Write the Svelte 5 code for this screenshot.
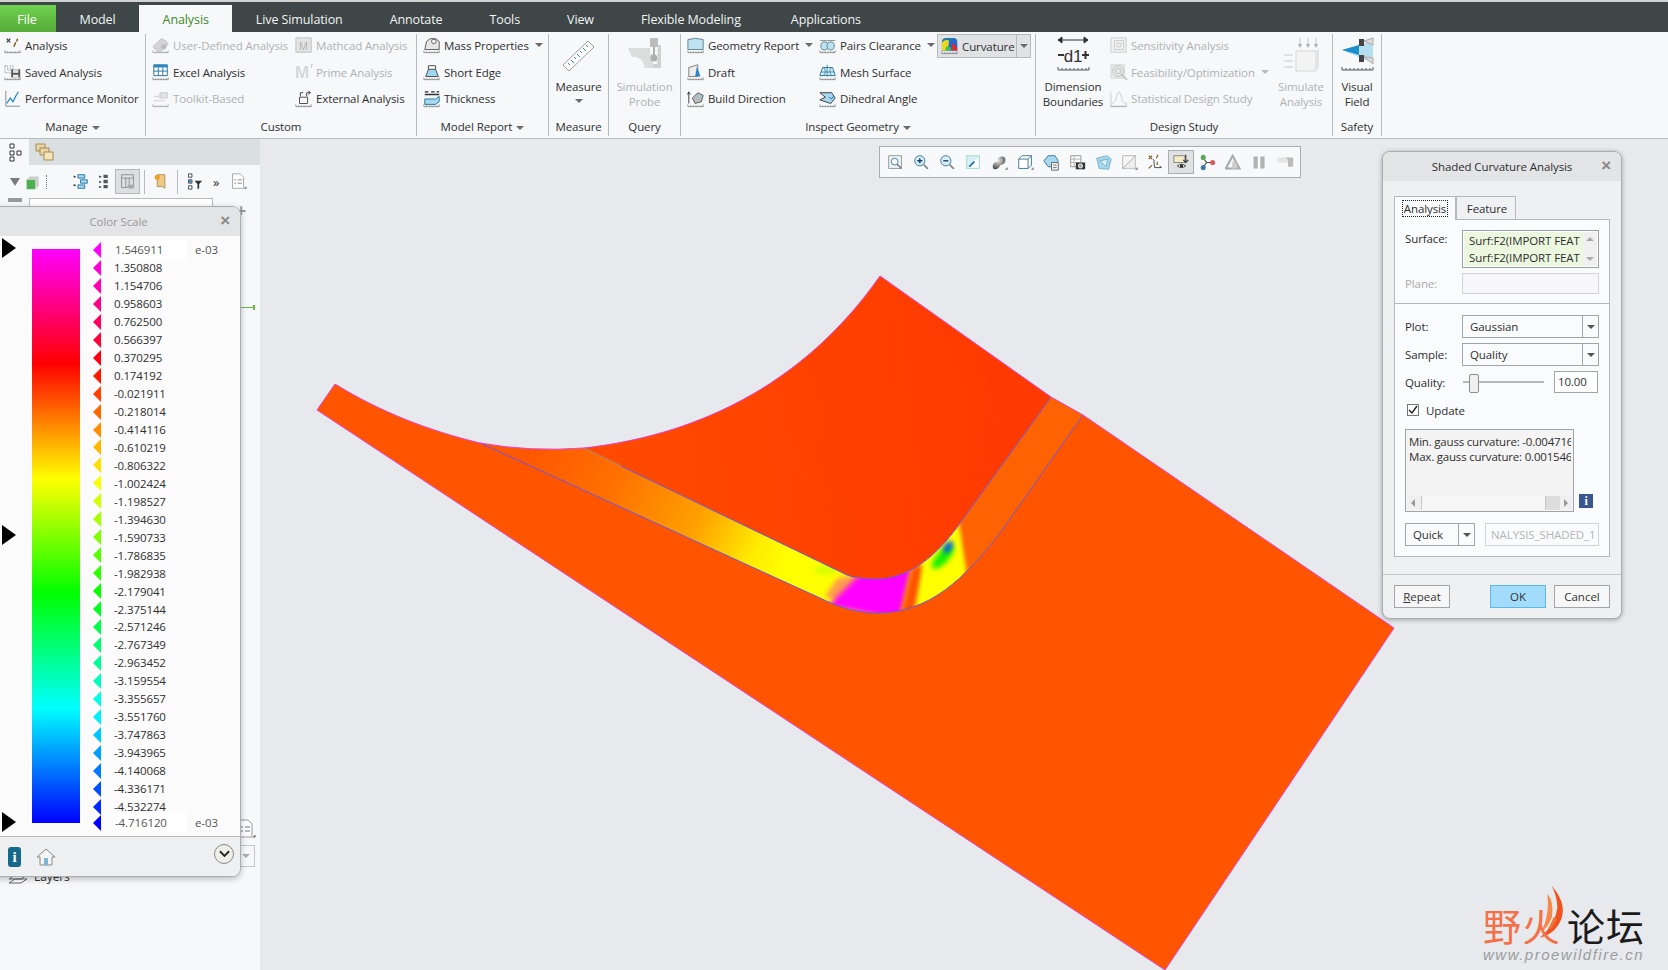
<script lang="ts">
  const R = '<path d="M1 18.5h17M1 16v2.5M4 17v1.5M7 17v1.5M10 17v1.5M13 17v1.5M16 17v1.5M18 16v2.5" stroke="#777" stroke-width=".8" fill="none"/>';
  const icons: Record<string, string> = {
    analysis: R + '<path d="M3 3l4 4M7 3l-4 4" stroke="#333" stroke-width="1.3"/><path d="M11 12l2-5M14 6l1-3" stroke="#7a5a18" stroke-width="1.6"/>',
    saved: R + '<path d="M1 3h3v5h3V3h3v8H1z" fill="none" stroke="#888" stroke-width=".8" stroke-dasharray="2 1"/><path d="M8 7h10v9H8z" fill="#555"/><path d="M10 7h6v4h-6z" fill="#ddd"/><path d="M10 13h6v3h-6z" fill="#eee"/>',
    perf: '<path d="M2 1v17h16" stroke="#777" fill="none" stroke-width=".9"/><path d="M3 15l4-6 3 4 3-6 3-5" stroke="#2a86c4" fill="none" stroke-width="1.4"/>',
    userdef: R + '<path d="M1 12l9-9 5 2 3 4-8 8-4 0z" fill="#c9c9c9" stroke="#aaa"/><circle cx="13" cy="12" r="3" fill="#aaa"/>',
    mathcad: '<path d="M1 2h17v16H1z" fill="#ddd" stroke="#aaa"/><text x="9.500" y="15" font-size="12" text-anchor="middle" fill="#999" font-family="Liberation Sans">M</text>',
    excel: R + '<path d="M2 2h15v12H2z" fill="#fff" stroke="#1c6f9c"/><path d="M2 2h15v3H2z" fill="#2a86c4"/><path d="M7 5v9M12 5v9M2 9h15" stroke="#1c6f9c"/>',
    prime: '<text x="0" y="17" font-size="19" font-weight="700" fill="#ccc" font-family="Liberation Sans">M</text><path d="M19 1l-1 4" stroke="#bbb" stroke-width="1.5"/>',
    toolkit: R + '<path d="M9 3h8v6H9z" fill="#ddd" stroke="#bbb"/><path d="M2 7h6M2 12h12M8 5l2 2-2 2" stroke="#bbb" fill="none"/>',
    external: R + '<path d="M5 8h9v7H5z" fill="#f5f5f5" stroke="#444"/><path d="M6 7V3h3M13 7V3h4M15 1l2 2-2 2" stroke="#333" fill="none"/>',
    mass: R + '<path d="M2 15l2-9 4-3h6l4 3v9z" fill="#e6e6e6" stroke="#555"/><circle cx="12" cy="6" r="2.5" fill="#fff" stroke="#555"/>',
    short: R + '<path d="M3 15l3-8h8l3 8z" fill="#9fd8ee" stroke="#444"/><path d="M6 3v4M14 3v4M6 3h8" stroke="#444" fill="none"/>',
    thick: R + '<path d="M2 10h12l4-3v6l-4 3H2z" fill="#a8d8ee" stroke="#1c6f9c"/><path d="M2 2h4M9 2h4M15 2h3M2 5h16" stroke="#333" stroke-width="1.4"/>',
    geometry: R + '<path d="M1 15V4q8-3 17 0v11z" fill="#bde3f1" stroke="#5a7f90"/>',
    draft: R + '<path d="M2 15V5l10-3v13z" fill="#eee" stroke="#777"/><path d="M11 4l4 11H9z" fill="#2a86c4"/>',
    build: R + '<path d="M2 15V3M0.5 5L2 2l1.5 3" stroke="#333" fill="none"/><path d="M6 9l6-6 6 3-2 7-7 2z" fill="#bbb" stroke="#555"/><path d="M9 9l5-4 3 2" fill="#8fd0ea"/>',
    pairs: R + '<path d="M1 5h17" stroke="#777" stroke-width=".8"/><ellipse cx="6" cy="11" rx="4" ry="4.500" fill="#bde3f1" stroke="#5a7f90"/><ellipse cx="13" cy="11" rx="4" ry="4.500" fill="#bde3f1" stroke="#5a7f90"/>',
    mesh: R + '<path d="M1 14L4 5h11l3 9z" fill="#d8eef7" stroke="#1c6f9c"/><path d="M2 10h15M9 2v13M5 5q4 4 0 9M14 5q-4 4 0 9" stroke="#1c6f9c" fill="none" stroke-width=".8"/>',
    dihedral: R + '<path d="M1 3h13l4 6-5 6-12-4 6-3z" fill="#a8d8ee" stroke="#333"/><path d="M11 8l3 2 2-3" stroke="#1c6f9c" fill="none"/>',
    curvature: R + '<path d="M1 15V5q0-4 5-4h8q4 0 4 4v10z" fill="#27a"/><path d="M1 15V6q4-4 8-2 0 6-3 11z" fill="#e8d820"/><path d="M9 4q5-3 9 2v9h-8z" fill="#2466d8"/><path d="M12 7q4 1 6 6v2h-6z" fill="#e02a20"/><path d="M5 12q3-3 6 0v3H5z" fill="#3ec04a"/>',
    sensitivity: '<path d="M1 2h17v16H1z" fill="#eee" stroke="#bbb"/><path d="M5 5h10v10H5zM8 8h4v4H8z" fill="none" stroke="#bbb"/>',
    feasibility: '<path d="M1 2h15v15H1z" fill="#e4e4e4" stroke="#ccc"/><circle cx="9" cy="9" r="6" fill="none" stroke="#aaa"/><circle cx="9" cy="9" r="3" fill="none" stroke="#aaa"/><path d="M12 12l7 7" stroke="#aaa" stroke-width="1.5"/>',
    statistical: R + '<path d="M1 15q5 0 6-6t3-7q2 1 3 7t6 6" fill="none" stroke="#bbb"/><path d="M1 2v13" stroke="#bbb"/>',

    // viewport toolbar
    refit: '<path d="M2 2h15v15H2z" fill="#eef6fa" stroke="#888"/><circle cx="9" cy="9" r="4" fill="#fff" stroke="#2a6a90"/><path d="M12 12l5 5" stroke="#777" stroke-width="1.6"/>',
    zin: '<circle cx="8" cy="8" r="6" fill="#d8eef7" stroke="#2a6a90"/><path d="M5 8h6M8 5v6" stroke="#123f66" stroke-width="1.6"/><path d="M12.500 12.500l5 5" stroke="#888" stroke-width="2"/>',
    zout: '<circle cx="8" cy="8" r="6" fill="#d8eef7" stroke="#2a6a90"/><path d="M5 8h6" stroke="#123f66" stroke-width="1.6"/><path d="M12.500 12.500l5 5" stroke="#888" stroke-width="2"/>',
    repaint: '<path d="M2 2h15v15H2z" fill="#d8eef7" stroke="#9db"/><path d="M3 16L16 4v12z" fill="#fff"/><path d="M5 15l6-6" stroke="#136f9c" stroke-width="2"/>',
    shade: '<defs><radialGradient id="sh" cx=".4" cy=".3" r=".8"><stop offset="0" stop-color="#eee"/><stop offset="1" stop-color="#333"/></radialGradient></defs><path d="M2 14q1-5 5-5 1-6 6-6 4 0 4 4 0 5-6 6-2 5-6 5-3 0-3-4z" fill="url(#sh)"/><path d="M17 18h2v-2" stroke="#444" fill="none"/>',
    cube: '<path d="M2 6h11v11H2zM2 6l4-4h11v11l-4 4M13 6l4-4" fill="#fff" stroke="#2a6a90"/><path d="M17 18h2v-2" stroke="#444" fill="none"/>',
    named: '<path d="M1 8l5-6h8l4 6-4 7H6z" fill="#a8d8ee" stroke="#2a6a90"/><path d="M10 10h8v9h-8z" fill="#f5f5f5" stroke="#555"/><path d="M12 13h4M12 16h4" stroke="#555"/>',
    camera: '<path d="M2 2h12v13H2z" fill="#fff" stroke="#888"/><path d="M2 6h12M2 10h12M6 2v13" stroke="#aaa"/><path d="M8 10h11v8H8z" fill="#333"/><circle cx="13.500" cy="14" r="2.500" fill="#aaa" stroke="#fff"/>',
    section: '<path d="M2 5l12-3 5 4-3 12-11-1z" fill="#a8d8ee" stroke="#6aa8c8"/><path d="M6 8l9-2-2 9z" fill="#dff1f8" stroke="#6aa8c8"/>',
    plane: '<path d="M2 17L17 2v15z" fill="#eee" stroke="#bbb"/><path d="M2 17L17 2H2z" fill="#f7f7f7" stroke="#aaa"/><path d="M17 18h2v-2" stroke="#444" fill="none"/>',
    datum: '<path d="M2 2l4 4M6 2L2 6M13 1l-2 4M2 17l4-4" stroke="#7a5a18" stroke-width="1.3"/><path d="M8 8l1 8h8M9 8l-2-2M15 14l2 2" stroke="#333" fill="none"/><path d="M12 9v4" stroke="#7a5a18" stroke-width="1.3"/>',
    appearance: '<path d="M1 2h13v8H1z" fill="#f6ecc8" stroke="#777"/><path d="M15 1v8M12 7l3 3 3-3" stroke="#333" fill="none" stroke-width="1.3"/><path d="M5 14q5-4 10 0-5 4-10 0z" fill="#fff" stroke="#333"/><circle cx="10" cy="14" r="2" fill="#333"/>',
    joint: '<path d="M5 5l4 5-4 5M9 10h7" stroke="#444" fill="none" stroke-width="1.3"/><circle cx="5" cy="4" r="3" fill="#5aa85a"/><circle cx="16" cy="10" r="3" fill="#d85a5a"/><circle cx="5" cy="16" r="3" fill="#3a7aaa"/>',
    tri: '<path d="M9 2l8 15H1z" fill="none" stroke="#aaa" stroke-width="2.500"/><path d="M9 8l5 3v6H8z" fill="#ccc"/>',
    pause: '<path d="M3 3h5v14H3zM11 3h5v14h-5z" fill="#b2b2b2"/>',
    record: '<path d="M1 4h6q6 0 6 6v5h6V4z" fill="#bbb"/><path d="M1 4h9q3 3 3 6H1z" fill="#e4e4e4"/>',

    // model tree
    treeNodes: '<path d="M5 2h4v4H5zM5 9h4v4H5zM5 15h4v4H5z" fill="#fff" stroke="#333"/><path d="M12 9h4v4h-4z" fill="#fff" stroke="#333"/>',
    folders: '<path d="M2 2h9v7H2z" fill="#e9d6a8" stroke="#a78a4c"/><path d="M6 6h9v7H6z" fill="#e9d6a8" stroke="#a78a4c"/><path d="M10 10h9v8h-9z" fill="#f3e4bc" stroke="#a78a4c"/>',
    expand: '<path d="M2 3l3 1.500L2 6zM2 13l3 1.500L2 16z" fill="#333"/><path d="M7 2h8v4H7zM10 8h8v4h-8zM7 14h8v4H7z" fill="#a8d8ee" stroke="#136f9c"/>',
    collapse: '<path d="M5 3l3 1.500L5 6zM5 9l3 1.500L5 12zM5 15l3 1.500L5 18z" fill="#333"/><path d="M10 2h5v4h-5zM10 8h5v4h-5zM10 14h5v4h-5z" fill="#555"/>',
    showcols: '<path d="M3 2h14v15H3zM3 6h14M8 6v11M12 6v11" fill="none" stroke="#888"/><ellipse cx="14" cy="16" rx="4" ry="2.500" fill="#aaa"/>',
    note: '<path d="M5 2h9v16l-3-2H5z" fill="#efc98a" stroke="#a78a4c"/><circle cx="5" cy="5" r="3" fill="#f0a020"/>',
    filter: '<path d="M3 1h4v4H3zM3 8h4v4H3zM3 15h4v4H3z" fill="#fff" stroke="#333"/><path d="M3.500 8.500h3v3h-3z" fill="#2a86c4"/><path d="M10 9h9l-3.500 4v5l-2 1v-6z" fill="#333"/>',
    doc: '<path d="M3 1h9l4 4v13H3z" fill="#fff" stroke="#999"/><path d="M5 8h2M9 8h5M5 12h2M9 12h5" stroke="#777"/><path d="M17 18h2v-2" stroke="#444" fill="none"/>',

    // big ribbon icons
    measure: '<path d="M2 28L27 4l6 6-25 24z" fill="#fff" stroke="#999"/><path d="M7 26l2 2M10 23l3 3M13 20l2 2M16 17l3 3M19 14l2 2M22 11l3 3M25 8l2 2" stroke="#2a86c4" stroke-width="1"/>',
    probe: '<path d="M1 11h22v6h3v14h-9q0-9-8-11H5z" fill="#d4d4d4"/><path d="M23 1h8v9h-8z" fill="#aaa"/><path d="M26 10h2v8h-2z" fill="#999"/><circle cx="27" cy="21" r="3.500" fill="#999"/><path d="M31 8h3v23h-8v-4h4z" fill="#c4c4c4"/>',
    dimension: '<path d="M1 3h30M1 3l4-3v6zM31 3l-4-3v6z" fill="#333" stroke="#333"/><path d="M1 18h6M25 18h7M28.500 14v8" stroke="#333" stroke-width="2"/><text x="16" y="25" font-size="17" text-anchor="middle" fill="#333" font-family="Liberation Sans">d1</text><path d="M1 33h31M1 30v3M5 31v2M9 31v2M13 31v2M17 31v2M21 31v2M25 31v2M29 31v2M32 30v3" stroke="#555"/>',
    simulate: '<path d="M13 14h20v20H13z" fill="#f2f2f2" stroke="#ccc"/><path d="M33 14l3-3v19l-3 4" fill="#ddd"/><path d="M17 1v9M25 1v9M33 1v9M1 18h9M1 24h9M1 30h9" stroke="#bbb" stroke-width="1.2"/><path d="M15 7l2 4 2-4M23 7l2 4 2-4M31 7l2 4 2-4" fill="#999"/>',
    visual: '<path d="M1 13l31-9v22z" fill="#b5def0"/><path d="M1 13l17-5v10z" fill="#1c90c8"/><path d="M18 2h5v7h-5zM18 18h5v7h-5z" fill="#444"/><path d="M23 4l9-3v7zM23 20l9 1v6z" fill="#ddd" stroke="#aaa"/><path d="M1 33h31M1 30v3M5 31v2M9 31v2M13 31v2M17 31v2M21 31v2M25 31v2M29 31v2M32 30v3" stroke="#555"/>'
  };

  const tabs = ['Model', 'Analysis', 'Live Simulation', 'Annotate', 'Tools', 'View', 'Flexible Modeling', 'Applications'];

  type Item = { t: string; i: string; off?: boolean; caret?: boolean; on?: boolean };
  type Col = { w: number; items?: Item[]; big?: { t: string[]; i: string; w: number; h: number; off?: boolean; caret?: boolean } };
  const groups: { label: string; w: number; pad: number; caret?: boolean; cols: Col[] }[] = [
    { label: 'Manage', w: 146, pad: 4, caret: true, cols: [{ w: 140, items: [
      { t: 'Analysis', i: 'analysis' }, { t: 'Saved Analysis', i: 'saved' }, { t: 'Performance Monitor', i: 'perf' } ] }] },
    { label: 'Custom', w: 271, pad: 6, cols: [
      { w: 143, items: [{ t: 'User-Defined Analysis', i: 'userdef', off: true }, { t: 'Excel Analysis', i: 'excel' }, { t: 'Toolkit-Based', i: 'toolkit', off: true }] },
      { w: 120, items: [{ t: 'Mathcad Analysis', i: 'mathcad', off: true }, { t: 'Prime Analysis', i: 'prime', off: true }, { t: 'External Analysis', i: 'external' }] } ] },
    { label: 'Model Report', w: 132, pad: 6, caret: true, cols: [{ w: 125, items: [
      { t: 'Mass Properties', i: 'mass', caret: true }, { t: 'Short Edge', i: 'short' }, { t: 'Thickness', i: 'thick' } ] }] },
    { label: 'Measure', w: 60, pad: 0, cols: [{ w: 59, big: { t: ['Measure'], i: 'measure', w: 36, h: 36, caret: true } }] },
    { label: 'Query', w: 72, pad: 0, cols: [{ w: 71, big: { t: ['Simulation', 'Probe'], i: 'probe', w: 36, h: 36, off: true } }] },
    { label: 'Inspect Geometry', w: 355, pad: 6, caret: true, cols: [
      { w: 132, items: [{ t: 'Geometry Report', i: 'geometry', caret: true }, { t: 'Draft', i: 'draft' }, { t: 'Build Direction', i: 'build' }] },
      { w: 118, items: [{ t: 'Pairs Clearance', i: 'pairs', caret: true }, { t: 'Mesh Surface', i: 'mesh' }, { t: 'Dihedral Angle', i: 'dihedral' }] },
      { w: 95, items: [{ t: 'Curvature', i: 'curvature', on: true }] } ] },
    { label: 'Design Study', w: 297, pad: 0, cols: [
      { w: 74, big: { t: ['Dimension', 'Boundaries'], i: 'dimension', w: 33, h: 36 } },
      { w: 170, items: [{ t: 'Sensitivity Analysis', i: 'sensitivity', off: true }, { t: 'Feasibility/Optimization', i: 'feasibility', off: true, caret: true }, { t: 'Statistical Design Study', i: 'statistical', off: true }] },
      { w: 42, big: { t: ['Simulate', 'Analysis'], i: 'simulate', w: 36, h: 36, off: true } } ] },
    { label: 'Safety', w: 49, pad: 0, cols: [{ w: 48, big: { t: ['Visual', 'Field'], i: 'visual', w: 33, h: 36 } }] }
  ];

  const viewTools = ['refit', 'zin', 'zout', 'repaint', 'shade', 'cube', 'named', 'camera', 'section', 'plane', 'datum', 'appearance', 'joint', 'tri', 'pause', 'record'];

  const values = ['1.546911', '1.350808', '1.154706', '0.958603', '0.762500', '0.566397', '0.370295', '0.174192', '-0.021911', '-0.218014', '-0.414116', '-0.610219', '-0.806322', '-1.002424', '-1.198527', '-1.394630', '-1.590733', '-1.786835', '-1.982938', '-2.179041', '-2.375144', '-2.571246', '-2.767349', '-2.963452', '-3.159554', '-3.355657', '-3.551760', '-3.747863', '-3.943965', '-4.140068', '-4.336171', '-4.532274', '-4.716120'];

  // magenta > red > yellow > green > cyan > blue
  function scaleColor(i: number) {
    const t = (i / (values.length - 1)) * 5;
    const s = Math.floor(Math.min(t, 4.999));
    const f = Math.round((t - s) * 255);
    if (s === 0) return `rgb(255,0,${255 - f})`;
    if (s === 1) return `rgb(255,${f},0)`;
    if (s === 2) return `rgb(${255 - f},255,0)`;
    if (s === 3) return `rgb(0,255,${f})`;
    return `rgb(0,${255 - f},255)`;
  }
</script>

<div class="app">
  <div class="tabbar">
    <div class="file">File</div>
    {#each tabs as t}
      <div class="tab" class:active={t === 'Analysis'}>{t}</div>
    {/each}
  </div>

  <div class="ribbon">
    {#each groups as g}
      <section class="group" style="width:{g.w}px">
        <div class="cols" style="padding-left:{g.pad}px">
          {#each g.cols as c}
            <div class="col" style="width:{c.w}px">
              {#if c.items}
                {#each c.items as it}
                  <div class="item" class:off={it.off} class:on={it.on}>
                    <svg class="ic" viewBox="0 0 20 20">{@html icons[it.i]}</svg>
                    <span>{it.t}</span>
                    {#if it.caret}<i class="caret"></i>{/if}
                    {#if it.on}<b class="split"><i class="caret"></i></b>{/if}
                  </div>
                {/each}
              {:else if c.big}
                <div class="big" class:off={c.big.off}>
                  <svg width={c.big.w} height={c.big.h} viewBox="0 0 {c.big.w} {c.big.h}">{@html icons[c.big.i]}</svg>
                  {#each c.big.t as line}<span>{line}</span>{/each}
                  {#if c.big.caret}<i class="caret"></i>{/if}
                </div>
              {/if}
            </div>
          {/each}
        </div>
        <div class="glabel">{g.label}{#if g.caret}<i class="caret"></i>{/if}</div>
      </section>
    {/each}
  </div>

  <div class="main">
    <aside class="tree">
      <div class="treetabs">
        <div class="ttab first"><svg class="ic" viewBox="0 0 20 20">{@html icons.treeNodes}</svg></div>
        <div class="ttab"><svg class="ic" viewBox="0 0 20 20">{@html icons.folders}</svg></div>
      </div>
      <div class="treetools">
        <i class="caret big-caret"></i>
        <svg class="ic cubeic" viewBox="0 0 20 20"><path d="M2 7h11v12H2z" fill="#4caf50"/><path d="M2 7l4-4h11l-4 4zM13 7l4-4v12l-4 4z" fill="#ccc"/></svg>
        <span class="dots"></span>
        <svg class="ic gap1" viewBox="0 0 20 20">{@html icons.expand}</svg>
        <svg class="ic gap2" viewBox="0 0 20 20">{@html icons.collapse}</svg>
        <span class="tsel"><svg class="ic" viewBox="0 0 20 20">{@html icons.showcols}</svg></span>
        <span class="vbar"></span>
        <svg class="ic gap3" viewBox="0 0 20 20">{@html icons.note}</svg>
        <span class="vbar v2"></span>
        <svg class="ic gap3" viewBox="0 0 20 20">{@html icons.filter}</svg>
        <span class="more">»</span>
        <svg class="ic gap4" viewBox="0 0 20 20">{@html icons.doc}</svg>
      </div>
      <div class="search"><span class="funnel"></span><div class="searchbox"></div><span class="plus">+</span></div>
      <div class="treelink"></div>
      <div class="treefoot">
        <svg class="ic docfoot" viewBox="0 0 20 20">{@html icons.doc}</svg>
        <div class="footsel"><i class="caret"></i></div>
        <div class="layers">
          <svg class="ic" viewBox="0 0 20 20"><path d="M1 13l6-4h12l-6 4zM1 17l6-4h12l-6 4z" fill="#fff" stroke="#666"/></svg>
          <span>Layers</span>
        </div>
      </div>
    </aside>

    <div class="viewport">
      <svg class="model" width="1408" height="831" viewBox="260 139 1408 831">
        <defs>
          <linearGradient id="topSurf" gradientUnits="userSpaceOnUse" x1="560" y1="440" x2="1000" y2="400">
            <stop offset="0" stop-color="#ff4c00" />
            <stop offset="1" stop-color="#ff3a00" />
          </linearGradient>
          <linearGradient id="stripGrad" gradientUnits="userSpaceOnUse" x1="540" y1="440" x2="790" y2="560">
            <stop offset="0" stop-color="#ff5800" />
            <stop offset=".3" stop-color="#ff7000" />
            <stop offset=".64" stop-color="#ffa000" />
            <stop offset=".88" stop-color="#ffee00" />
            <stop offset="1" stop-color="#ffff00" />
          </linearGradient>
          <clipPath id="stripClip">
            <path d="M480,443 L820,598 C838,607 858,613 877,613 C930,613 965,578 1000,533 L1083,415 L1051,397 L960,523 C945,545 915,579 877,579 C865,579 855,578 847,575 L584,448 Q530,452 480,443 Z" />
          </clipPath>
          <filter id="soft" x="-40%" y="-40%" width="180%" height="180%"><feGaussianBlur stdDeviation="4" /></filter>
          <filter id="soft2" x="-40%" y="-40%" width="180%" height="180%"><feGaussianBlur stdDeviation="2.500" /></filter>
        </defs>

        <path class="lower" d="M317,410 L1165,970 L1394,628 L1083,415 L1000,533 C965,578 930,613 877,613 C858,613 838,607 820,598 L480,443 C430,431 380,412 335,384 Z" />
        <path fill="url(#topSurf)" d="M584,448 C690,436 800,390 880,276 L1051,397 L960,523 C945,545 915,579 877,579 C865,579 855,578 847,575 Z" />

        <g clip-path="url(#stripClip)">
          <rect x="470" y="380" width="630" height="240" fill="url(#stripGrad)" />
          <path d="M957,515 L1040,380 L1100,380 L1100,560 L968,610 Z" fill="#ff6200" filter="url(#soft2)" />
          <ellipse cx="826" cy="570" rx="12" ry="5" fill="#d8ff00" filter="url(#soft2)" />
          <path d="M838,578 L862,574 L846,606 L825,596 Z" fill="#ff9a50" filter="url(#soft2)" />
          <path d="M860,574 L912,566 L900,620 L828,606 Z" fill="#ff00ff" filter="url(#soft2)" />
          <path d="M912,566 L924,564 L914,614 L900,618 Z" fill="#ff5000" filter="url(#soft2)" />
          <path d="M924,560 L958,526 L966,572 L918,616 Z" fill="#ffff00" filter="url(#soft2)" />
          <ellipse cx="943" cy="557" rx="15" ry="6" fill="#14f000" filter="url(#soft2)" transform="rotate(-48 943 557)" />
          <ellipse cx="948" cy="547" rx="7" ry="3.500" fill="#0050ff" filter="url(#soft2)" transform="rotate(-55 948 547)" />
        </g>

        <path class="blue" d="M480,443 L820,598 C838,607 858,613 877,613 C930,613 965,578 1000,533 L1083,415" />
        <path class="blue" d="M621,466 L847,575 C855,578 865,579 877,579 C915,579 945,545 960,523 L1051,397" />
        <path class="greyline" d="M584,448 L621,466" />
        <path class="pink" d="M317,410 L1165,970 L1394,628 L1083,415 L1051,397 L880,276 C800,390 690,436 584,448 Q530,452 480,443 C430,431 380,412 335,384 Z" />
      </svg>

      <div class="viewtools">
        {#each viewTools as v}
          <span class="vt" class:sel={v === 'appearance'}><svg class="ic" viewBox="0 0 20 20">{@html icons[v]}</svg></span>
        {/each}
      </div>

      <div class="mark">
        <svg class="flame" viewBox="0 0 624 300" width="208" height="100">
          <path d="M275,47 Q330,110 295,165 Q275,195 240,203 Q285,165 292,115 Q292,80 275,47z" fill="#f0531d" />
          <path d="M262,72 Q282,92 276,140 Q266,170 245,185 Q270,130 262,72z" fill="#f58a4a" />
        </svg>
        <div class="cn"><span class="ye">野火</span><span class="lt">论坛</span></div>
        <div class="url">www.proewildfire.cn</div>
      </div>
    </div>
  </div>

  <div class="scale">
    <header class="win-head"><span class="scaletitle">Color Scale</span><b class="x">×</b></header>
    <div class="scalebody">
      <i class="mark-tri" style="top:2px"></i>
      <i class="mark-tri" style="top:289px"></i>
      <i class="mark-tri" style="top:576px"></i>
      <div class="bar"></div>
      <div class="rows">
        {#each values as v, i}
          <div class="row" class:end={i === 0 || i === values.length - 1} class:last={i === values.length - 1}>
            <i class="tri" style="border-right-color:{scaleColor(i)}"></i>
            <span class="val">{v}</span>
            {#if i === 0 || i === values.length - 1}<span class="exp">e-03</span>{/if}
          </div>
        {/each}
      </div>
    </div>
    <footer class="scalefoot">
      <span class="infobig">i</span>
      <svg class="ic" viewBox="0 0 20 20"><path d="M1 10l9-8 9 8h-3v8H4v-8z" fill="#f4f4f4" stroke="#888"/><path d="M8 11h4v7H8z" fill="#7fb5d5"/></svg>
      <span class="chev"><svg viewBox="0 0 12 8" width="11" height="8"><path d="M1 1l5 5 5-5" fill="none" stroke="#222" stroke-width="2"/></svg></span>
    </footer>
  </div>

  <div class="dialog">
    <header class="win-head dark"><span>Shaded Curvature Analysis</span><b class="x">×</b></header>
    <div class="dbody">
      <div class="dtabs">
        <div class="dtab current"><span>Analysis</span></div>
        <div class="dtab">Feature</div>
      </div>
      <div class="dpanel">
        <div class="sect one">
          <div class="frow surface">
            <label for="s1">Surface:</label>
            <div class="list" id="s1">
              <div class="lines"><div>Surf:F2(IMPORT FEAT</div><div>Surf:F2(IMPORT FEAT</div></div>
              <div class="vscroll"><i class="up"></i><i class="dn"></i></div>
            </div>
          </div>
          <div class="frow plane">
            <label class="dim" for="p1">Plane:</label>
            <div class="planebox" id="p1"></div>
          </div>
        </div>
        <div class="sect two">
          <div class="frow">
            <label for="d1">Plot:</label>
            <div class="select" id="d1"><span>Gaussian</span><b><i class="caret dk"></i></b></div>
          </div>
          <div class="frow">
            <label for="d2">Sample:</label>
            <div class="select" id="d2"><span>Quality</span><b><i class="caret dk"></i></b></div>
          </div>
          <div class="frow q">
            <label for="d3">Quality:</label>
            <div class="slider" id="d3"><i class="thumb"></i></div>
            <div class="qval">10.00</div>
          </div>
          <div class="check"><span class="box"><svg viewBox="0 0 12 12" width="12" height="12"><path d="M2 6l3 3 5-7" fill="none" stroke="#222" stroke-width="1.4"/></svg></span>Update</div>
          <div class="resultrow">
            <div class="result">
              <div class="rtext">Min. gauss curvature: -0.004716<br />Max. gauss curvature: 0.001546</div>
              <div class="hscroll"><i class="lf"></i><span class="hthumb"></span><i class="rt"></i></div>
            </div>
            <span class="info">i</span>
          </div>
          <div class="quick">
            <div class="qsel"><span>Quick</span><b><i class="caret dk"></i></b></div>
            <div class="nameinp"><span>NALYSIS_SHADED_1</span></div>
          </div>
        </div>
      </div>
    </div>
    <footer class="dfoot">
      <button class="btn"><u>R</u>epeat</button>
      <span class="spacer"></span>
      <button class="btn ok">OK</button>
      <button class="btn">Cancel</button>
    </footer>
  </div>
</div>

<style>
  :global(body) { margin: 0; background: #e8e9ed; }
  .app {
    position: relative; width: 1668px; height: 970px; overflow: hidden;
    font-family: "Open Sans", "Noto Sans", sans-serif; font-size: 11.5px; color: #2f2f2f;
    background: #e8e9ed; letter-spacing: -0.1px;
  }
  .ic { width: 20px; height: 20px; flex: none; display: block; }

  .tabbar { height: 30px; padding-top: 2px; background: #3e4647; display: flex; align-items: flex-end; box-shadow: inset 0 2px 0 #cfd3d2; }
  .file { width: 56px; height: 27px; padding: 1px 2px 0 0; box-sizing: border-box; background: linear-gradient(#6fd24f, #55ab38); color: #fff; display: flex; align-items: center; justify-content: center; font-size: 12.500px; }
  .tab { height: 27px; padding: 1px 23.500px 0; box-sizing: border-box; color: #f2f4f4; font-size: 12.500px; display: flex; align-items: center; }
  .tab:last-child { margin-left: 3px; }
  .tab.active { background: #f6f8fa; color: #3c8a28; }

  .ribbon { height: 106px; background: #f6f8fa; border-bottom: 1px solid #b5bcbc; display: flex; box-sizing: content-box; }
  .group { box-sizing: border-box; height: 102px; margin-top: 2px; border-right: 1px solid #b5bcbc; display: flex; flex-direction: column; }
  .cols { flex: 1; display: flex; margin-top: -2px; }
  .col { display: flex; flex-direction: column; }
  .item { height: 26.800px; display: flex; align-items: center; gap: 3px; white-space: nowrap; }
  .item .ic { width: 18px; height: 18px; }
  .item.off, .big.off { color: #b0b2b4; }
  .item.off .ic, .big.off svg { opacity: .75; }
  .item.on { width: 94px; height: 24px; margin-top: 2px; background: #e0e2e4; border: 1px solid #b5b9bb; box-sizing: border-box; position: relative; padding-left: 3px; }
  .split { position: absolute; right: 0; top: 0; bottom: 0; width: 13px; border-left: 1px solid #b5b9bb; display: flex; align-items: center; justify-content: center; }
  .split .caret { margin: 0; }
  .caret { display: inline-block; width: 0; height: 0; border: 4px solid transparent; border-top: 4.500px solid #6a6a6a; border-bottom: 0; margin-left: 3px; vertical-align: middle; }
  .item.off .caret { border-top-color: #bbb; }
  .big { display: flex; flex-direction: column; align-items: center; line-height: 15px; white-space: nowrap; padding-top: 5px; }
  .big svg { margin-bottom: 6px; overflow: visible; }
  .big .caret { margin: 5px 0 0; }
  .glabel { height: 20px; text-align: center; line-height: 21px; white-space: nowrap; }
  .glabel .caret { margin-left: 4px; }

  .main { display: flex; height: 831px; }
  .tree { width: 260px; flex: none; background: #f6f8fa; display: flex; flex-direction: column; position: relative; }
  .treetabs { height: 26px; background: #dadfe1; display: flex; }
  .ttab { width: 29px; display: flex; align-items: center; justify-content: center; }
  .ttab.first { background: #f6f8fa; }
  .treetools { height: 33px; display: flex; align-items: center; padding-left: 10px; }
  .treetools .ic { width: 17px; height: 17px; }
  .big-caret { border-width: 5px; border-top-width: 8px; border-top-color: #7b7b7b; margin: 0; }
  .treetools .cubeic { width: 16px; height: 16px; margin-left: 5px; }
  .dots { width: 2px; height: 14px; margin-left: 5px; border-left: 1px dotted #777; }
  .gap1 { margin-left: 23px; }
  .gap2 { margin-left: 6px; }
  .tsel { background: #dcdfe1; border: 1px solid #b3b7b9; padding: 3px; margin-left: 3px; }
  .vbar { width: 1px; height: 24px; margin-left: 4px; background: #b9bcbe; }
  .gap3 { margin-left: 8px; }
  .v2 { margin-left: 7px; }
  .more { font-size: 13px; margin-left: 10px; }
  .treetools .gap4 { margin-left: 11px; }
  .search { display: flex; height: 22px; align-items: flex-start; padding-left: 8px; }
  .funnel { width: 14px; height: 8px; border-top: 4px solid #999; }
  .searchbox { width: 182px; margin-left: 7px; height: 30px; border: 1px solid #bbb; background: #fff; }
  .plus { color: #9a9a9a; font-size: 18px; font-weight: 700; margin-left: 23px; line-height: 24px; }
  .treelink { position: absolute; left: 240px; top: 168px; width: 15px; height: 1px; background: #66bb44; }
  .treelink::after { content: ""; position: absolute; right: 0; top: -2px; width: 2px; height: 5px; background: #66bb44; }
  .treefoot { margin-top: auto; height: 146px; position: relative; }
  .docfoot { position: absolute; left: 236px; top: -5px; }
  .footsel { position: absolute; left: 236px; top: 21px; width: 19px; height: 22px; border: 1px solid #c5c5c5; box-sizing: border-box; display: flex; align-items: center; justify-content: center; }
  .footsel .caret { margin: 0; border-top-color: #aaa; }
  .layers { position: absolute; left: 8px; top: 42px; display: flex; gap: 6px; align-items: center; font-size: 12px; }

  .viewport { position: relative; flex: 1; }
  .model { position: absolute; left: 0; top: 0; display: block; }
  .lower { fill: #ff5500; }
  .blue { fill: none; stroke: #6a50e0; stroke-width: 1; }
  .greyline { fill: none; stroke: #a08a80; stroke-width: 1; }
  .pink { fill: none; stroke: #e83fd0; stroke-width: 1; }

  .viewtools { position: absolute; left: 619px; top: 7px; width: 422px; height: 32px; box-sizing: border-box; background: #f7f9fa; border: 1px solid #a9adb0; display: flex; align-items: center; padding: 0 2px; }
  .vt { width: 26px; height: 24px; flex: none; display: flex; align-items: center; justify-content: center; box-sizing: border-box; }
  .vt .ic { width: 17px; height: 17px; }
  .vt.sel { background: #dfe1e3; border: 1px solid #a9adb0; }

  .mark { position: absolute; left: 1223px; top: 751px; width: 170px; height: 75px; }
  .flame { position: absolute; left: -23px; top: -20px; }
  .cn { position: absolute; left: 0; top: 15px; font-family: "Noto Sans CJK SC", sans-serif; font-size: 38px; line-height: 40px; white-space: nowrap; letter-spacing: 1px; }
  .ye { color: #f47048; }
  .lt { color: #1a1a1a; margin-left: 6px; }
  .url { position: absolute; left: 0; top: 56px; font-family: "Liberation Sans", sans-serif; font-style: italic; font-size: 15px; letter-spacing: 1.500px; color: #9a9c9e; white-space: nowrap; }

  .win-head { height: 29px; background: #e3e4e6; display: flex; align-items: center; justify-content: center; color: #999; font-size: 11.500px; position: relative; flex: none; }
  .win-head.dark { color: #2f2f2f; }
  .scaletitle { margin-left: 4px; }
  .x { position: absolute; right: 10px; top: 5px; font-size: 17px; line-height: 17px; color: #888; font-weight: 700; font-family: "Liberation Sans", sans-serif; }

  .scale { position: absolute; left: -8px; top: 206px; width: 249px; height: 671px; box-sizing: border-box; border: 1px solid #a9adb0; border-radius: 9px; background: #fbfbfb; display: flex; flex-direction: column; overflow: hidden; box-shadow: 0 2px 6px rgba(0, 0, 0, .25); }
  .scalebody { position: relative; flex: 1; display: flex; padding-left: 39px; }
  .mark-tri { position: absolute; left: 9px; width: 0; height: 0; border-left: 14px solid #000; border-top: 10px solid transparent; border-bottom: 10px solid transparent; }
  .bar { width: 48px; height: 574px; margin-top: 13px; background: linear-gradient(#ff00ff, #ff0000, #ffff00, #00ff00, #00ffff, #0000ff); }
  .rows { margin-left: 13px; padding-top: 5px; }
  .row { height: 17.960px; width: 130px; display: flex; align-items: center; position: relative; white-space: nowrap; }
  .row.last { margin-top: -1.500px; }
  .tri { width: 0; height: 0; border-right: 8px solid; border-top: 8px solid transparent; border-bottom: 8px solid transparent; margin-right: 13px; flex: none; }
  .end .val { background: #fff; width: 72px; padding-left: 2px; line-height: 19px; color: #555; }
  .end .tri { margin-right: 12px; }
  .exp { margin-left: 8px; color: #555; }
  .scalefoot { height: 39px; flex: none; background: #eff0f2; border-top: 1px solid #b9bbbd; display: flex; align-items: center; padding: 0 14px 0 15px; gap: 15px; position: relative; }
  .infobig { width: 13px; height: 20px; background: #156a8c; border-radius: 3px; color: #fff; font: 700 15px/20px "Liberation Serif", serif; text-align: center; }
  .chev { position: absolute; right: 6px; top: 7px; width: 18px; height: 18px; border-radius: 50%; background: #efeee6; border: 1px solid #888; display: flex; align-items: center; justify-content: center; }

  .dialog { position: absolute; left: 1382px; top: 151px; width: 240px; height: 468px; box-sizing: border-box; border: 1px solid #a9adb0; border-radius: 8px; background: #eff0f2; display: flex; flex-direction: column; overflow: hidden; box-shadow: 0 1px 5px rgba(0, 0, 0, .3); }
  .dbody { flex: 1; padding: 15px 11px 0; }
  .dtabs { display: flex; height: 24px; position: relative; z-index: 1; }
  .dtab { box-sizing: border-box; height: 23px; width: 60px; padding-left: 2px; border: 1px solid #b5b8ba; border-bottom: 0; background: #f0f1f3; display: flex; align-items: center; justify-content: center; }
  .dtab.current { width: 62px; height: 24px; padding: 0; background: #fafbfc; }
  .dtab.current span { outline: 1px dotted #222; padding: 0 1px; }
  .dpanel { margin-top: -1px; height: 338px; box-sizing: border-box; border: 1px solid #b5b8ba; background: #fafbfc; }
  .sect { padding: 10px; }
  .sect.one { height: 84px; box-sizing: border-box; border-bottom: 1px solid #b5b8ba; }
  .sect.two { padding-top: 11px; }
  .frow { display: flex; align-items: center; margin-bottom: 5px; height: 23px; }
  .frow label { width: 57px; flex: none; }
  .frow label.dim { color: #aaa; }
  .surface { height: 38px; align-items: flex-start; }
  .surface label { padding-top: 1px; }
  .plane { height: 21px; margin: 0; }
  .list { width: 137px; height: 38px; box-sizing: border-box; border: 1px solid #9c9fa1; padding: 1px; display: flex; background: #fff; }
  .lines { flex: 1; background: #ebf8df; padding-left: 5px; overflow: hidden; white-space: nowrap; line-height: 17px; }
  .vscroll { width: 14px; background: #f0f0f0; display: flex; flex-direction: column; justify-content: space-between; align-items: center; padding: 5px 0; box-sizing: border-box; }
  .up { border: 4px solid transparent; border-bottom: 4px solid #aaa; border-top: 0; }
  .dn { border: 4px solid transparent; border-top: 4px solid #aaa; border-bottom: 0; }
  .planebox { width: 137px; height: 21px; box-sizing: border-box; background: #f6f6fb; border: 1px solid #d3d3d6; }
  .select { width: 137px; height: 23px; box-sizing: border-box; border: 1px solid #a2a5a7; display: flex; align-items: center; padding-left: 7px; }
  .select span { flex: 1; }
  .select b, .qsel b { width: 15px; height: 100%; border-left: 1px solid #a2a5a7; display: flex; align-items: center; justify-content: center; }
  .caret.dk { margin: 0; border-top-color: #555; }
  .q { height: 22px; margin-bottom: 0; margin-top: 5px; }
  .slider { width: 81px; height: 2px; background: #b8b8b8; position: relative; margin-left: 1px; }
  .thumb { position: absolute; left: 6px; top: -7px; width: 8px; height: 17px; background: #f0f0f0; border: 1px solid #8f8f8f; border-radius: 2px; }
  .qval { width: 44px; height: 22px; box-sizing: border-box; margin-left: 10px; border: 1px solid #a2a5a7; background: #fff; padding-left: 3px; line-height: 20px; }
  .check { display: flex; align-items: center; gap: 7px; height: 12px; margin: 11px 0 0 2px; }
  .box { width: 12px; height: 12px; box-sizing: border-box; border: 1px solid #777; display: flex; background: #fff; }
  .box svg { margin: -1px; }
  .resultrow { display: flex; align-items: flex-end; margin-top: 13px; gap: 5px; }
  .result { width: 169px; height: 83px; box-sizing: border-box; border: 1px solid #a2a5a7; background: #f4f4f4; display: flex; flex-direction: column; justify-content: space-between; }
  .rtext { margin-right: 2px; padding: 4px 0 0 3px; line-height: 15px; white-space: nowrap; overflow: hidden; letter-spacing: -0.2px; }
  .hscroll { height: 14px; margin: 0 1px 1px; background: #f0f0f0; display: flex; align-items: center; padding: 0 4px; }
  .hthumb { flex: 1; height: 14px; margin: 0 18px 0 6px; background: #f6f6f6; border: 1px solid #c7c7c7; border-top: 0; border-bottom: 0; box-sizing: border-box; box-shadow: 14px 0 0 0 #ddd; }
  .lf { border: 4px solid transparent; border-right: 4px solid #999; border-left: 0; }
  .rt { border: 4px solid transparent; border-left: 4px solid #999; border-right: 0; }
  .info { width: 14px; height: 14px; margin-bottom: 4px; background: #3a5590; color: #fff; font: 700 12px/14px "Liberation Serif", serif; text-align: center; }
  .quick { display: flex; margin-top: 11px; gap: 10px; }
  .qsel { width: 70px; height: 23px; box-sizing: border-box; border: 1px solid #a2a5a7; display: flex; align-items: center; padding-left: 7px; }
  .qsel span { flex: 1; }
  .nameinp { width: 114px; height: 23px; box-sizing: border-box; border: 1px solid #d3d3d6; color: #b5b5b5; line-height: 21px; padding-left: 5px; overflow: hidden; white-space: nowrap; }
  .dfoot { height: 45px; flex: none; margin-top: 17px; box-sizing: border-box; border-top: 1px solid #c5c7c9; padding: 10px 11px 0; display: flex; gap: 8px; }
  .spacer { flex: 1; }
  .btn { width: 56px; height: 23px; box-sizing: border-box; border: 1px solid #a2a5a7; background: #f7f7f8; font: inherit; color: #333; padding: 0; }
  .btn.ok { background: #a3dcfb; border-color: #59b7ea; }
</style>
